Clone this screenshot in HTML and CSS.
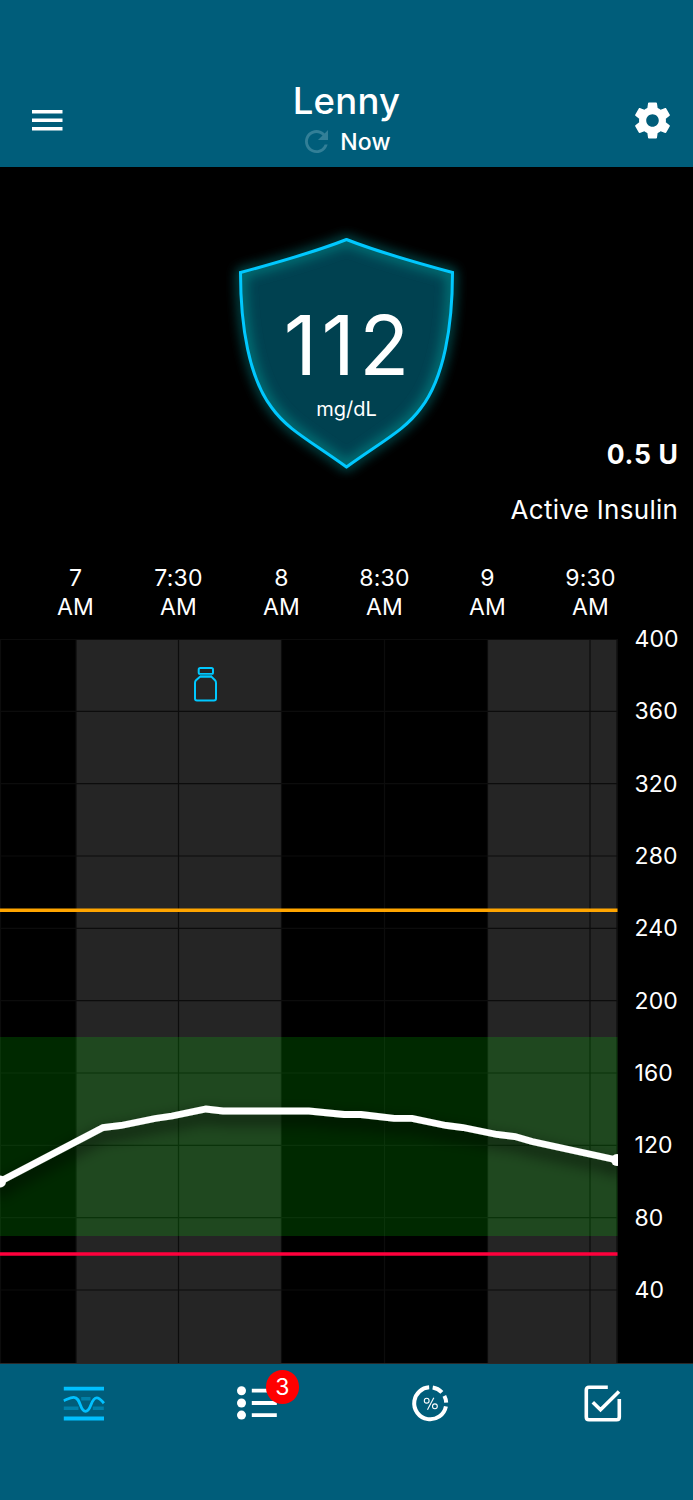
FILE: index.html
```html
<!DOCTYPE html>
<html lang="en">
<head>
<meta charset="utf-8">
<title>Lenny</title>
<link rel="stylesheet" href="styles.css">
</head>
<body>
<div class="app">
  <header class="header">
    <svg class="menu" viewBox="3 6 18 12" preserveAspectRatio="none"><path d="M3 18h18v-2H3v2zm0-5h18v-2H3v2zm0-7v2h18V6H3z"/></svg>
    <div class="heading">
      <h1 class="name">Lenny</h1>
      <div class="updated">
        <svg class="refresh" viewBox="4 4 16 16"><path d="M17.65 6.35C16.2 4.9 14.21 4 12 4c-4.42 0-7.99 3.58-7.99 8s3.57 8 7.99 8c3.73 0 6.84-2.55 7.73-6h-2.08c-.82 2.33-3.04 4-5.65 4-3.31 0-6-2.69-6-6s2.69-6 6-6c1.66 0 3.14.69 4.22 1.78L13 11h7V4l-2.35 2.35z"/></svg>
        <span class="now">Now</span>
      </div>
    </div>
    <svg class="gear" viewBox="0 0 24 24"><path d="M19.43 12.98c.04-.32.07-.64.07-.98s-.03-.66-.07-.98l2.11-1.65c.19-.15.24-.42.12-.64l-2-3.46c-.12-.22-.39-.3-.61-.22l-2.49 1c-.52-.4-1.08-.73-1.69-.98l-.38-2.65C14.46 2.18 14.25 2 14 2h-4c-.25 0-.46.18-.49.42l-.38 2.65c-.61.25-1.17.59-1.69.98l-2.49-1c-.23-.09-.49 0-.61.22l-2 3.46c-.13.22-.07.49.12.64l2.11 1.65c-.04.32-.07.65-.07.98s.03.66.07.98l-2.11 1.65c-.19.15-.24.42-.12.64l2 3.46c.12.22.39.3.61.22l2.49-1c.52.4 1.08.73 1.69.98l.38 2.65c.03.24.24.42.49.42h4c.25 0 .46-.18.49-.42l.38-2.65c.61-.25 1.17-.59 1.69-.98l2.49 1c.23.09.49 0 .61-.22l2-3.46c.12-.22.07-.49-.12-.64l-2.11-1.65zM12 15.5c-1.93 0-3.5-1.57-3.5-3.5s1.57-3.5 3.5-3.5 3.5 1.57 3.5 3.5-1.57 3.5-3.5 3.5z"/></svg>
  </header>

  <section class="status">
    <div class="shield">
      <svg class="shield-shape" viewBox="220 220 253 260">
        <defs>
          <path id="outline" d="M346.5 239.5Q311 253.5 240.5 272.5C240.5 326 249 378 272 408C288 430 309 440 346.5 467C384 440 405 430 421 408C444 378 452.5 326 452.5 272.5Q382 253.5 346.5 239.5Z"/>
          <clipPath id="inside"><use href="#outline"/></clipPath>
          <filter id="glow" x="-20%" y="-20%" width="140%" height="140%"><feGaussianBlur stdDeviation="6"/></filter>
        </defs>
        <use href="#outline" class="halo" filter="url(#glow)"/>
        <use href="#outline" class="shield-fill"/>
        <g clip-path="url(#inside)"><use href="#outline" class="inner-glow" filter="url(#glow)"/></g>
        <use href="#outline" class="shield-edge"/>
      </svg>
      <div class="reading">
        <div class="value">112</div>
        <div class="unit">mg/dL</div>
      </div>
    </div>
    <div class="insulin">
      <div class="dose">0.5 U</div>
      <div class="dose-label">Active Insulin</div>
    </div>
  </section>

  <section class="graph">
    <div class="times">
      <div>7<br>AM</div><div>7:30<br>AM</div><div>8<br>AM</div><div>8:30<br>AM</div><div>9<br>AM</div><div>9:30<br>AM</div>
    </div>
    <div class="plot-row">
      <svg class="plot" viewBox="0 639 617.5 724.5">
        <defs>
          <filter id="shadow" x="-5%" y="-80%" width="110%" height="300%"><feDropShadow dx="0" dy="7" stdDeviation="8" flood-color="#000" flood-opacity=".9"/></filter>
        </defs>
        <path class="hour" d="M76 639H281.500V1363H76ZM487.500 639H617.500V1363H487.500Z"/>
        <path class="grid" d="M.5 639V1363M76 639V1363M178.500 639V1363M281.500 639V1363M384.500 639V1363M487.500 639V1363M590 639V1363M617 639V1363"/>
        <path class="grid" d="M0 639.500H617.500M0 711.300H617.500M0 783.600H617.500M0 856H617.500M0 928.300H617.500M0 1000.600H617.500M0 1073H617.500M0 1145.300H617.500M0 1217.600H617.500M0 1290H617.500"/>
        <rect class="range" x="0" y="1037" width="617.500" height="199"/>
        <path class="high" d="M0 910.200H617.500"/>
        <path class="low" d="M0 1254H617.500"/>
        <g filter="url(#shadow)">
          <polyline class="trend" points="0,1181.5 103,1127.500 121,1125.500 155,1118.500 172,1116 206,1109 223,1111 309,1111 344,1114.500 361,1114.500 394,1118.300 412,1118.300 446,1125.500 463,1127.500 497,1134.500 515,1136.500 532,1141.500 617,1160"/>
          <circle class="dot" cx="0" cy="1181.500" r="6"/>
          <circle class="dot" cx="617" cy="1160" r="6"/>
        </g>
        <g class="vial">
          <rect x="198.700" y="667.900" width="14.300" height="6" rx="1.500"/>
          <path class="neck" d="M200 675.400H212"/>
          <path d="M200 676.800H211.500L215 680.300Q216 681.300 216 683V698.500Q216 700.500 214 700.500H197Q195 700.500 195 698.500V683Q195 681.300 196 680.300Z"/>
        </g>
      </svg>
      <div class="levels">
        <div>400</div><div>360</div><div>320</div><div>280</div><div>240</div><div>200</div><div>160</div><div>120</div><div>80</div><div>40</div>
      </div>
    </div>
  </section>

  <nav class="tabs">
    <div class="tab">
      <svg class="icon" viewBox="0 0 44 44">
        <path class="faint" d="M19.200 17.700H28.500M1.800 27.300H16.500M30.800 27.300H41.800"/>
        <path class="active" stroke-width="3.800" d="M1.800 7.700H42M1.800 37.500H42"/>
        <path class="active" stroke-width="2.800" d="M1.800 19.700C6 18 8 16.300 11.800 16.300C19 16.300 17.500 30.300 23.500 30.300C29.500 30.300 28.500 16.800 34.800 16.800C38 16.800 39.500 19.500 41.800 22.300"/>
      </svg>
    </div>
    <div class="tab">
      <svg class="icon" viewBox="0 0 44 44">
        <circle class="solid" cx="6.500" cy="9.700" r="4.500"/><circle class="solid" cx="6.500" cy="22" r="4.500"/><circle class="solid" cx="6.500" cy="34.100" r="4.500"/>
        <path class="line" stroke-width="3.800" d="M16.800 9.700H41.800M16.800 22H41.800M16.800 34.100H41.800"/>
      </svg>
      <span class="badge">3</span>
    </div>
    <div class="tab">
      <svg class="icon" viewBox="0 0 44 44">
        <circle class="line" stroke-width="4" cx="22.200" cy="22.300" r="16" pathLength="360" stroke-dasharray="38 15 25 14 255 13" transform="rotate(-81 22.200 22.300)"/>
        <g class="line" stroke-width="1.100"><circle cx="18.700" cy="19.700" r="2.400"/><circle cx="26.900" cy="25.300" r="2.400"/><path d="M25.800 16.700L19.500 28.700"/></g>
      </svg>
    </div>
    <div class="tab">
      <svg class="icon" viewBox="0 0 44 44">
        <path class="line" stroke-width="3.600" d="M26.800 6.200H8Q5.300 6.200 5.300 9V36Q5.300 38.800 8 38.800H35.600Q38.300 38.800 38.300 36V18M11.800 21.300L19.500 28.700L38 10.500"/>
      </svg>
    </div>
  </nav>
</div>
</body>
</html>
```
FILE: styles.css
```css
* { box-sizing: border-box; }
body {
  margin: 0;
  background: #000;
  color: #fff;
  font-family: Inter, "Liberation Sans", sans-serif;
}
svg { display: block; flex: none; }
.app {
  width: 693px;
  height: 1500px;
  display: flex;
  flex-direction: column;
  overflow: hidden;
}

.header {
  height: 167px;
  flex: none;
  padding: 81px 19px 0 32px;
  display: grid;
  grid-template-columns: 43px 1fr 43px;
  background: #005d7a;
}
.menu { width: 30.500px; height: 20.500px; margin-top: 29px; fill: #fff; }
.gear { width: 43px; height: 43px; margin-top: 18px; fill: #fff; }
.heading { padding-right: 13px; display: flex; flex-direction: column; align-items: center; }
.name { margin: 0; font-size: 36.500px; line-height: 40px; font-weight: 500; letter-spacing: .2px; }
.updated { display: flex; align-items: center; gap: 12px; height: 41px; padding-left: 3px; }
.refresh { width: 23px; height: 23px; fill: #327f97; }
.now { font-size: 23px; font-weight: 500; letter-spacing: .2px; }

.status {
  height: 397px;
  flex: none;
  padding: 53px 15px 0 0;
  display: grid;
  grid-template-columns: 220px 253px 1fr;
}
.shield { grid-column: 2; display: grid; height: 260px; }
.shield-shape, .reading { grid-area: 1 / 1; }
.shield-shape { width: 253px; height: 260px; }
.halo { fill: none; stroke: #00878a; stroke-width: 5; }
.shield-fill { fill: #004150; }
.inner-glow { fill: none; stroke: #007478; stroke-width: 11; }
.shield-edge { fill: none; stroke: #00c8ff; stroke-width: 3; }
.reading { z-index: 1; text-align: center; padding-top: 76px; }
.value { font-size: 82px; line-height: 100px; letter-spacing: 4.500px; padding-left: 4.500px; }
.unit { font-size: 20px; line-height: 26px; }
.insulin { text-align: right; padding-top: 214px; white-space: nowrap; display: flex; flex-direction: column; align-items: flex-end; gap: 15px; }
.dose { font-size: 26.500px; line-height: 40px; font-weight: 700; letter-spacing: .7px; margin-right: -.7px; }
.dose-label { font-size: 26px; line-height: 41px; letter-spacing: .3px; margin-right: -.3px; }

.graph { height: 799.500px; flex: none; }
.times { height: 75px; padding-left: 24px; display: grid; grid-template-columns: repeat(6, 103px); text-align: center; font-size: 23px; line-height: 28.500px; letter-spacing: .2px; }
.plot-row { height: 724.500px; display: flex; border-bottom: 1px solid #292929; }
.plot { width: 617.500px; height: 724.500px; }
.levels { margin: -36px 0 0 17px; display: grid; grid-template-rows: repeat(10, 72.330px); align-items: center; align-content: start; font-size: 23px; letter-spacing: .1px; }
.hour { fill: #252525; }
.grid { fill: none; stroke: #0c0c0c; stroke-width: 1.200; }
.range { fill: rgba(0, 255, 0, .16); }
.high { stroke: #ffa500; stroke-width: 3.500; }
.low { stroke: #ff003c; stroke-width: 3.500; }
.trend { fill: none; stroke: #fff; stroke-width: 6.800; }
.dot { fill: #fff; }
.vial { fill: none; stroke: #00c8ff; stroke-width: 2; }
.neck { stroke: #087f9e; }

.tabs {
  flex: 1;
  margin-left: -2.500px;
  width: 696px;
  padding-top: 17.500px;
  display: grid;
  grid-template-columns: repeat(4, 173px) 1fr;
  background: #005d7a;
}
.tab { position: relative; display: flex; justify-content: center; align-items: flex-start; }
.icon { width: 44px; height: 44px; }
.active { fill: none; stroke: #00c0ff; }
.faint { stroke: #0080a8; stroke-width: 3.500; }
.solid { fill: #fff; }
.line { fill: none; stroke: #fff; }
.badge {
  position: absolute;
  left: 95px;
  top: -11px;
  width: 33.500px;
  height: 33.500px;
  border-radius: 50%;
  background: #f00;
  font-size: 23px;
  line-height: 34px;
  text-align: center;
}
```
